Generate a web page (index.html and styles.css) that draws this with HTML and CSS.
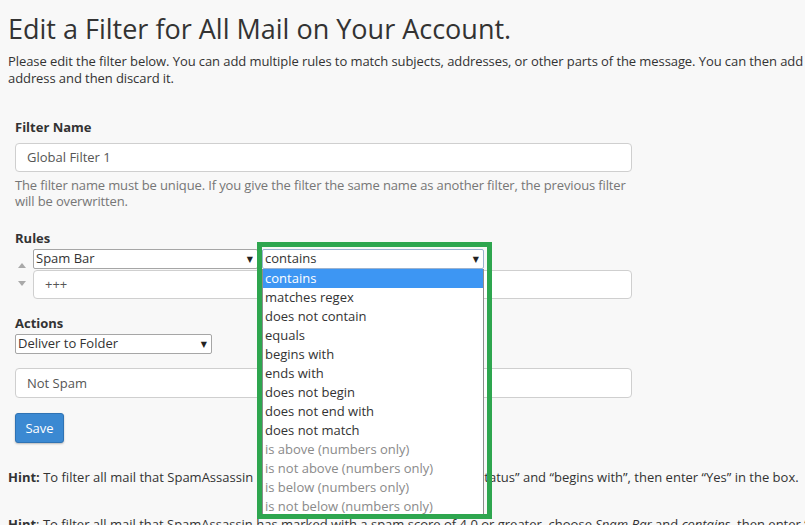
FILE: index.html
```html
<!DOCTYPE html>
<html lang="en">
<head>
<meta charset="utf-8">
<title>Edit a Filter</title>
<link rel="stylesheet" href="styles.css">
</head>
<body>
<div class="page">
  <h1 class="title">Edit a Filter for All Mail on Your Account.</h1>
  <p class="intro">Please edit the filter below. You can add multiple rules to match subjects, addresses, or other parts of the message. You can then add multiple actions to take on a message such as to deliver the message to a different<br>address and then discard it.</p>

  <form class="filter-form">
    <div class="group group-name">
      <label class="label">Filter Name</label>
      <input class="text-input name-input" type="text" value="Global Filter 1">
      <p class="help">The filter name must be unique. If you give the filter the same name as another filter, the previous filter will be overwritten.</p>
    </div>

    <div class="group group-rules">
      <label class="label">Rules</label>
      <div class="rule">
        <div class="movers">
          <svg class="mover mover-up" width="8" height="5" viewBox="0 0 8 5"><path d="M0 5 L4 0 L8 5 Z" fill="#a9a9a9"/></svg>
          <svg class="mover mover-down" width="8" height="5" viewBox="0 0 8 5"><path d="M0 0 L8 0 L4 5 Z" fill="#a9a9a9"/></svg>
        </div>
        <div class="rule-fields">
          <div class="rule-selects">
            <div class="select sel-part"><span>Spam Bar</span><span class="caret">&#9660;</span></div>
            <div class="cond-wrap">
              <div class="select sel-cond"><span>contains</span><span class="caret">&#9660;</span></div>
              <ul class="dropdown">
                <li class="opt selected">contains</li>
                <li class="opt">matches regex</li>
                <li class="opt">does not contain</li>
                <li class="opt">equals</li>
                <li class="opt">begins with</li>
                <li class="opt">ends with</li>
                <li class="opt">does not begin</li>
                <li class="opt">does not end with</li>
                <li class="opt">does not match</li>
                <li class="opt disabled">is above (numbers only)</li>
                <li class="opt disabled">is not above (numbers only)</li>
                <li class="opt disabled">is below (numbers only)</li>
                <li class="opt disabled">is not below (numbers only)</li>
              </ul>
              <div class="frame"></div>
            </div>
          </div>
          <input class="text-input rule-val" type="text" value="+++">
        </div>
      </div>
    </div>

    <div class="group group-actions">
      <label class="label">Actions</label>
      <div class="select sel-action"><span>Deliver to Folder</span><span class="caret">&#9660;</span></div>
      <input class="text-input action-val" type="text" value="Not Spam">
      <button class="btn-save" type="button">Save</button>
    </div>
  </form>

  <p class="hint"><b>Hint:</b> To filter all mail that SpamAssassin has marked as spam, choose “Spam Status” and “begins with”, then enter “Yes” in the box.</p>
  <p class="hint hint-2"><b>Hint</b>: To filter all mail that SpamAssassin has marked with a spam score of 4.0 or greater, choose <i>Spam Bar</i> and <i>contains</i>, then enter “++++” in the box.</p>
</div>
</body>
</html>
```

FILE: styles.css
```css
html, body {
  margin: 0;
  padding: 0;
  overflow: hidden;
  background: #f8f8f8;
}
body {
  font-family: "Open Sans", "DejaVu Sans", sans-serif;
  font-size: 13px;
  color: #333;
}
.page {
  padding: 0 0 0 8px;
  width: 1100px;
}
.title {
  margin: 12px 0 0;
  font-size: 27px;
  line-height: 34px;
  font-weight: 400;
  color: #333;
}
.intro {
  margin: 6.5px 0 0;
  line-height: 17px;
  white-space: nowrap;
  letter-spacing: -0.08px;
}
.filter-form {
  padding-left: 7px;
  width: 617px;
}
.label {
  display: block;
  font-weight: 700;
  line-height: 17px;
}
.group-name { margin-top: 32px; }
.group-rules { margin-top: 21.5px; }
.group-actions { margin-top: 16.5px; }

.text-input {
  display: block;
  box-sizing: border-box;
  width: 617px;
  height: 29px;
  margin: 0;
  padding: 0 11px;
  border: 1px solid #cfcfcf;
  border-radius: 4px;
  background: #fff;
  font-family: inherit;
  font-size: 13px;
  color: #555;
}
.name-input { margin-top: 7px; }
.help {
  margin: 5px 0 0;
  line-height: 16px;
  color: #767676;
  letter-spacing: -0.13px;
}

.rule {
  display: flex;
  margin-top: 2px;
}
.movers {
  width: 18px;
  flex: none;
  display: flex;
  flex-direction: column;
  align-items: flex-start;
  padding-left: 3px;
  box-sizing: border-box;
}
.mover { display: block; }
.mover-up { margin-top: 13.5px; }
.mover-down { margin-top: 13px; }
.rule-fields { flex: 1; }
.rule-selects {
  display: flex;
  gap: 4px;
}
.select {
  box-sizing: border-box;
  height: 19.5px;
  display: flex;
  align-items: center;
  justify-content: space-between;
  padding: 0 4px 0 2px;
  background: #fff;
  border: 1px solid #a6a6a6;
  border-radius: 2px;
  color: #333;
  line-height: 17px;
}
.caret {
  font-size: 8px;
  color: #222;
}
.sel-part { width: 225px; }
.cond-wrap {
  position: relative;
  width: 222px;
}
.sel-cond {
  width: 222px;
  border-color: #9bb2cf;
}
.dropdown {
  position: absolute;
  left: 0;
  top: 100%;
  z-index: 5;
  width: 222px;
  box-sizing: border-box;
  margin: 0;
  padding: 0;
  list-style: none;
  background: #fff;
  border: 1px solid #8d8d8d;
  border-top: none;
}
.opt {
  height: 19px;
  line-height: 19px;
  padding-left: 2px;
  color: #333;
  white-space: nowrap;
}
.opt.selected {
  background: #3d96f3;
  color: #fff;
}
.opt.disabled { color: #8a8a8a; }
.frame {
  position: absolute;
  z-index: 6;
  left: -5px;
  top: -7px;
  right: -8px;
  height: 277px;
  box-sizing: border-box;
  border: 5px solid #2ea64f;
  pointer-events: none;
}
.rule-val {
  width: 599px;
  margin-top: 1px;
}

.sel-action {
  width: 197px;
  height: 20px;
  margin-top: 1.5px;
}
.action-val {
  height: 30px;
  margin-top: 14px;
}
.btn-save {
  display: block;
  margin-top: 15px;
  width: 49px;
  height: 30px;
  padding: 0;
  border: 1px solid #2f73b4;
  border-radius: 3px;
  background: #3b89d2;
  color: #fff;
  font-family: inherit;
  font-size: 13px;
  box-shadow: 0 1px 2px rgba(0,0,0,0.25);
}

.hint {
  margin: 26.5px 0 0;
  line-height: 17px;
  white-space: nowrap;
}
.hint-2 { margin-top: 30px; }
.hint b { font-weight: 700; }
```
